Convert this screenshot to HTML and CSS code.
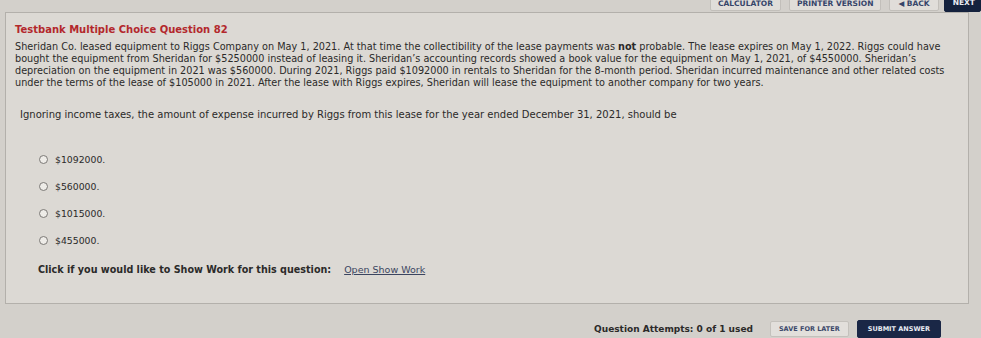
FILE: index.html
```html
<!DOCTYPE html>
<html>
<head>
<meta charset="utf-8">
<link rel="stylesheet" href="styles.css">
</head>
<body>
<div class="page">
  <div class="topbar">
    <span class="tbtn">CALCULATOR</span>
    <span class="tbtn">PRINTER VERSION</span>
    <span class="tbtn back">&#9664; BACK</span>
    <span class="tbtn next">NEXT</span>
  </div>
  <div class="qbox">
    <h1 class="qtitle">Testbank Multiple Choice Question 82</h1>
    <p class="qtext">Sheridan Co. leased equipment to Riggs Company on May 1, 2021. At that time the collectibility of the lease payments was <b>not</b> probable. The lease expires on May 1, 2022. Riggs could have bought the equipment from Sheridan for $5250000 instead of leasing it. Sheridan’s accounting records showed a book value for the equipment on May 1, 2021, of $4550000. Sheridan’s depreciation on the equipment in 2021 was $560000. During 2021, Riggs paid $1092000 in rentals to Sheridan for the 8-month period. Sheridan incurred maintenance and other related costs under the terms of the lease of $105000 in 2021. After the lease with Riggs expires, Sheridan will lease the equipment to another company for two years.</p>
    <p class="qprompt">Ignoring income taxes, the amount of expense incurred by Riggs from this lease for the year ended December 31, 2021, should be</p>
    <div class="options">
      <label class="opt"><span class="radio"></span>$1092000.</label>
      <label class="opt"><span class="radio"></span>$560000.</label>
      <label class="opt"><span class="radio"></span>$1015000.</label>
      <label class="opt"><span class="radio"></span>$455000.</label>
    </div>
    <div class="showwork"><b>Click if you would like to Show Work for this question:</b><a class="swlink">Open Show Work</a></div>
  </div>
  <div class="footer">
    <span class="attempts">Question Attempts: 0 of 1 used</span>
    <span class="fbtn save">SAVE FOR LATER</span>
    <span class="fbtn submit">SUBMIT ANSWER</span>
  </div>
</div>
</body>
</html>
```
FILE: styles.css
```css
html, body {
  margin: 0;
  padding: 0;
}
body {
  width: 981px;
  height: 338px;
  overflow: hidden;
  background: #d3d0cb;
  font-family: "DejaVu Sans", Verdana, sans-serif;
  color: #2b2a29;
}
.page {
  display: flex;
  flex-direction: column;
  height: 338px;
}
.topbar {
  height: 12px;
  display: flex;
  justify-content: flex-end;
  align-items: flex-end;
  gap: 8px;
  overflow: hidden;
}
.tbtn {
  display: block;
  height: 13px;
  line-height: 13px;
  padding: 0 7px;
  margin-bottom: 1px;
  font-size: 7.5px;
  font-weight: bold;
  color: #36456a;
  background: #e0ddd9;
  border: 1px solid #c2bfba;
  border-radius: 2px;
}
.tbtn.back { padding: 0 8px; margin-right: -3px; }
.tbtn.next {
  background: #14213d;
  color: #e8ebf2;
  border-color: #14213d;
  padding: 0 5px 0 8px;
  margin-bottom: 0;
  height: 15px;
}
.qbox {
  margin: 0 12px 0 5px;
  height: 293px;
  border: 1px solid #b3b0ab;
  background: #dcd9d4;
  padding: 11px 10px 0 9px;
  box-sizing: border-box;
}
.qtitle {
  margin: 0 0 6px 0;
  font-size: 10px;
  font-weight: bold;
  color: #b3282c;
}
.qtext {
  margin: 0;
  font-size: 9.7px;
  line-height: 12px;
  width: 945px;
}
.qprompt {
  margin: 20px 0 0 5px;
  font-size: 10px;
}
.options {
  display: flex;
  flex-direction: column;
  gap: 16px;
  margin: 34px 0 0 24px;
}
.opt {
  display: flex;
  align-items: center;
  gap: 7px;
  font-size: 9.3px;
  height: 11px;
}
.radio {
  width: 7px;
  height: 7px;
  border: 1px solid #7b7976;
  border-radius: 50%;
  background: #eeece8;
}
.showwork {
  margin: 18px 0 0 23px;
  font-size: 9.6px;
  display: flex;
  align-items: baseline;
  gap: 13px;
}
.swlink {
  font-size: 9.5px;
  text-decoration: underline;
  color: #3b4560;
}
.footer {
  flex: 1;
  display: flex;
  justify-content: flex-end;
  align-items: center;
  padding: 16px 40px 0 0;
}
.attempts {
  font-size: 9px;
  font-weight: bold;
  margin-right: 17px;
}
.fbtn {
  font-size: 6.5px;
  font-weight: bold;
  padding: 0 8px;
  height: 14px;
  line-height: 14px;
  border-radius: 2px;
}
.save {
  color: #3d4a6b;
  background: #e2dfdb;
  border: 1px solid #c4c1bc;
  margin-right: 8px;
}
.submit {
  color: #e9ecf3;
  background: #1a2746;
  border: 1px solid #1a2746;
  height: 16px;
  line-height: 16px;
  padding: 0 10px;
}
```
